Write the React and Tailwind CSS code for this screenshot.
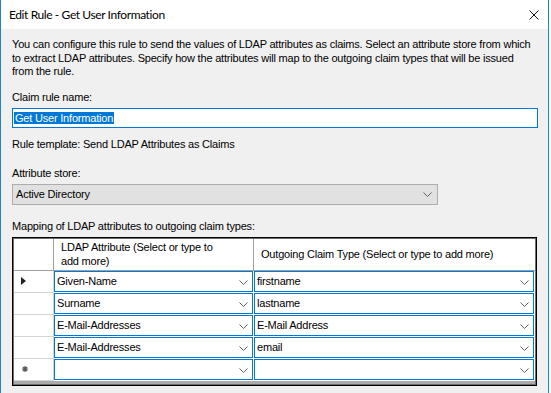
const rows = [
  { attr: "Given-Name", claim: "firstname", current: true },
  { attr: "Surname", claim: "lastname" },
  { attr: "E-Mail-Addresses", claim: "E-Mail Address" },
  { attr: "E-Mail-Addresses", claim: "email" },
  { attr: "", claim: "", isNew: true },
];

function Chevron({ className = "" }) {
  return (
    <svg width="9" height="5" viewBox="0 0 9 5" className={className}>
      <path d="M0.5 0.5 L4.5 4.5 L8.5 0.5" fill="none" stroke="#606060" strokeWidth="1" />
    </svg>
  );
}

function CellCombo({ value, width }) {
  return (
    <div className={`${width} h-full bg-white pr-px pb-px`}>
      <div className="relative flex h-full items-center border border-[#0078d7] bg-white pl-[2px]">
        <span className="leading-none">{value}</span>
        <Chevron className="absolute right-[4px] top-[8px]" />
      </div>
    </div>
  );
}

export default function App() {
  return (
    <div
      className="h-[393px] w-[551px] overflow-hidden bg-white text-[11px] tracking-[-0.2px] text-black"
      style={{ fontFamily: '"Liberation Sans", Arial, sans-serif' }}
    >
      <div className="h-full w-[549px] border-x border-[#1883d7] bg-[#f0f0f0]">
        {/* title bar */}
        <div className="relative flex h-[29px] items-center bg-white pl-[8px]">
          <span
            className="text-[12px] leading-none tracking-[-0.4px]"
            style={{ fontFamily: '"Segoe UI", Lato, "Noto Sans", sans-serif' }}
          >
            Edit Rule - Get User Information
          </span>
          <svg width="10" height="10" viewBox="0 0 10 10" className="absolute right-[9px] top-[10px]">
            <path d="M0.5 0.5 L9.5 9.5 M9.5 0.5 L0.5 9.5" stroke="#111" strokeWidth="1" />
          </svg>
        </div>

        <div className="flex flex-col pl-[11px] pt-[9px]">
          <p className="whitespace-nowrap leading-[13.5px]">
            You can configure this rule to send the values of LDAP attributes as claims. Select an attribute store from which
            <br />
            to extract LDAP attributes. Specify how the attributes will map to the outgoing claim types that will be issued
            <br />
            from the rule.
          </p>

          <div className="mt-[12px] leading-[13px]">Claim rule name:</div>
          <div className="mt-[4px] flex h-[20px] w-[526px] items-center border border-[#0078d7] bg-white pl-[1px]">
            <span className="bg-[#0078d7] px-[1px] leading-[12px] text-white">Get User Information</span>
          </div>

          <div className="mt-[10px] leading-[13px]">Rule template: Send LDAP Attributes as Claims</div>

          <div className="mt-[16px] leading-[13px]">Attribute store:</div>
          <div className="relative mt-[4px] flex h-[21px] w-[426px] items-center border border-[#adadad] bg-[#e1e1e1] pl-[3px]">
            <span className="leading-none">Active Directory</span>
            <Chevron className="absolute right-[5px] top-[7px]" />
          </div>

          <div className="mb-[5px] mt-[15px] leading-[12px]">Mapping of LDAP attributes to outgoing claim types:</div>

          {/* grid */}
          <div className="h-[149px] w-[525px] border border-black bg-[#ababab] p-px shadow-[inset_0_0_0_1px_#6d6d6d]">
            <div className="flex h-[32px] bg-white">
              <div className="w-[40px] border-b border-r border-[#a0a0a0]" />
              <div className="flex w-[200px] flex-col justify-center border-b border-r border-[#a0a0a0] pl-[7px] leading-[14px]">
                <span>LDAP Attribute (Select or type to</span>
                <span>add more)</span>
              </div>
              <div className="flex w-[281px] items-center border-b border-[#a0a0a0] pl-[7px]">
                Outgoing Claim Type (Select or type to add more)
              </div>
            </div>
            {rows.map((row, i) => (
              <div key={i} className="flex h-[22px]">
                <div className="flex w-[40px] items-center border-b border-r border-[#d4d4d4] bg-white pl-[7px]">
                  {row.current && (
                    <svg width="5" height="8" viewBox="0 0 5 8">
                      <path d="M0 0 L5 4 L0 8 Z" fill="#222" />
                    </svg>
                  )}
                  {row.isNew && (
                    <svg width="6" height="6" viewBox="0 0 6 6" className="ml-[1px]">
                      <path d="M3 0 V6 M0 3 H6 M0.8 0.8 L5.2 5.2 M5.2 0.8 L0.8 5.2" stroke="#555" strokeWidth="1.2" />
                    </svg>
                  )}
                </div>
                <CellCombo value={row.attr} width="w-[200px]" />
                <CellCombo value={row.claim} width="w-[281px]" />
              </div>
            ))}
          </div>
        </div>
      </div>
    </div>
  );
}
